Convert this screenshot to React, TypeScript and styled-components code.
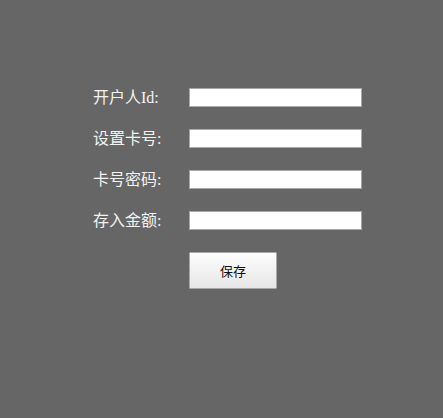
import React from "react";
import styled, { createGlobalStyle } from "styled-components";

const Global = createGlobalStyle`
  html, body { margin: 0; padding: 0; background: #666666; }
  body { font-family: "Liberation Serif", "Noto Sans CJK SC", serif; }
`;

const Page = styled.div`
  width: 443px;
  height: 418px;
  background: #666666;
  box-sizing: border-box;
  padding: 88px 0 0 93px;
`;

const Form = styled.form`
  display: grid;
  grid-template-columns: 96px 173px;
  row-gap: 22px;
  align-items: center;
  margin: 0;
`;

const Label = styled.label`
  color: #f2f2f2;
  font-size: 16px;
  line-height: 19px;
  white-space: nowrap;
  font-family: "Liberation Serif", "Noto Sans CJK SC", serif;
`;

const Input = styled.input`
  box-sizing: border-box;
  width: 173px;
  height: 19px;
  margin: 0;
  padding: 0 3px;
  border: 1px solid #a9a9a9;
  background: #ffffff;
  outline: none;
`;

const Button = styled.button`
  grid-column: 2;
  box-sizing: border-box;
  width: 88px;
  height: 37px;
  margin: 0;
  border: 1px solid #a8a8a8;
  border-radius: 1px;
  background: linear-gradient(#fdfdfd, #e6e6e6);
  color: #111111;
  font-size: 13px;
  font-family: "Noto Sans CJK SC", sans-serif;
  cursor: pointer;
`;

const fields = ["开户人Id:", "设置卡号:", "卡号密码:", "存入金额:"];

export default function App() {
  return (
    <>
      <Global />
      <Page>
        <Form onSubmit={(e) => e.preventDefault()}>
          {fields.map((f) => (
            <React.Fragment key={f}>
              <Label>{f}</Label>
              <Input type="text" />
            </React.Fragment>
          ))}
          <Button type="submit">保存</Button>
        </Form>
      </Page>
    </>
  );
}
